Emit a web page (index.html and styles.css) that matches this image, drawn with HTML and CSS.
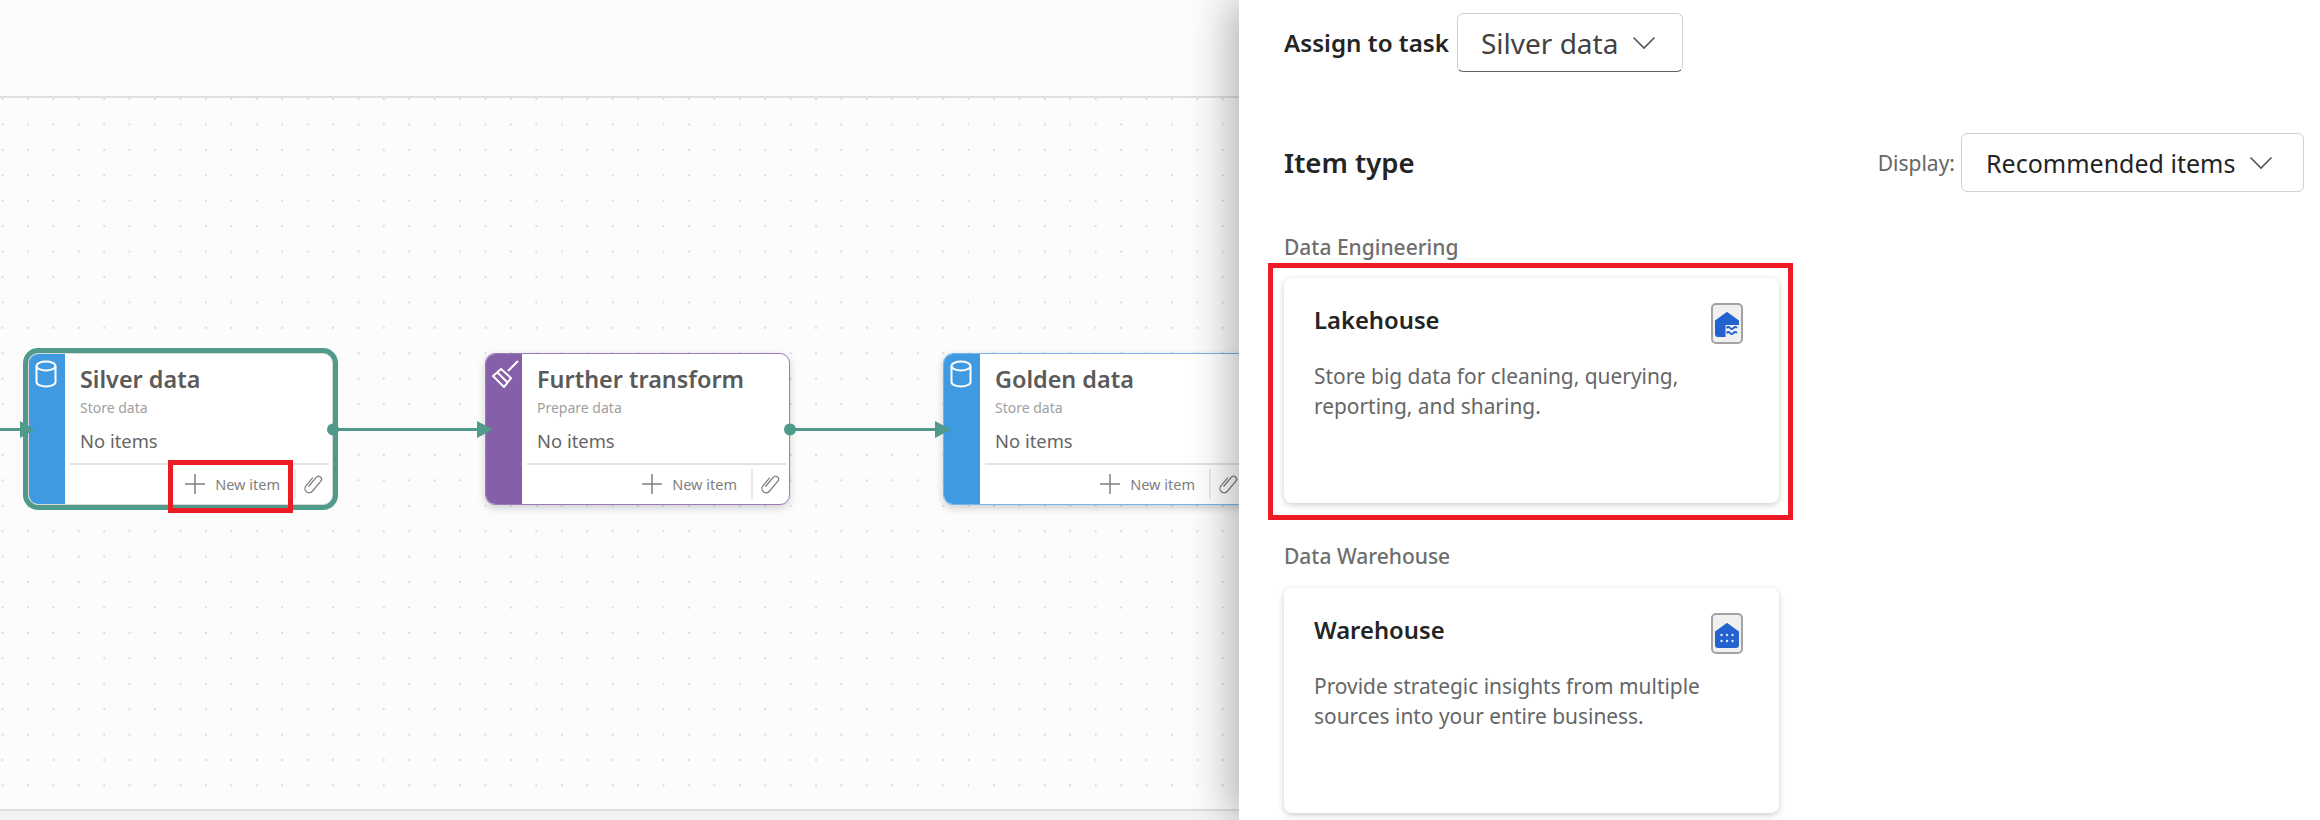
FILE: index.html
```html
<!DOCTYPE html>
<html>
<head>
  <title>New item</title>
  <link rel="stylesheet" href="styles.css">
</head>
<body>

  <div class="page">
    <div class="canvas">
      <div class="toolbar"></div>

      <div class="grid">
        <div class="node node-blue node-selected node-silver">
          <div class="strip">
            <svg class="strip-icon" width="24" height="28" viewBox="0 0 24 28"><ellipse cx="12" cy="6" rx="9.5" ry="4.5"/><path d="M2.500 6v16c0 2.500 4.300 4.500 9.500 4.500s9.500-2 9.500-4.500V6"/></svg>
          </div>
          <div class="node-body">
            <div class="node-title">Silver data</div>
            <div class="node-sub">Store data</div>
            <div class="node-items">No items</div>
            <div class="node-foot">
              <div class="new-item">
                <svg width="22" height="22" viewBox="0 0 22 22"><path d="M11 1v20M1 11h20"/></svg>
                <span>New item</span>
              </div>
              <div class="clip">
                <svg width="24" height="24" viewBox="0 0 20 20"><path transform="rotate(40 10 10)" d="M6.500 6v9a3.500 3.500 0 0 0 7 0V4a2.500 2.500 0 0 0-5 0v10"/></svg>
              </div>
            </div>
          </div>
          <div class="red-mark"></div>
        </div>

        <div class="node node-purple node-transform">
          <div class="strip">
            <svg class="strip-icon" width="28" height="28" viewBox="0 0 28 28"><path d="M27 1 17 11M10 9 20 18 13 27 2 16ZM6.500 12.500 16.500 22.500"/></svg>
          </div>
          <div class="node-body">
            <div class="node-title">Further transform</div>
            <div class="node-sub">Prepare data</div>
            <div class="node-items">No items</div>
            <div class="node-foot">
              <div class="new-item">
                <svg width="22" height="22" viewBox="0 0 22 22"><path d="M11 1v20M1 11h20"/></svg>
                <span>New item</span>
              </div>
              <div class="clip">
                <svg width="24" height="24" viewBox="0 0 20 20"><path transform="rotate(40 10 10)" d="M6.500 6v9a3.500 3.500 0 0 0 7 0V4a2.500 2.500 0 0 0-5 0v10"/></svg>
              </div>
            </div>
          </div>
        </div>

        <div class="node node-blue node-golden">
          <div class="strip">
            <svg class="strip-icon" width="24" height="28" viewBox="0 0 24 28"><ellipse cx="12" cy="6" rx="9.500" ry="4.500"/><path d="M2.500 6v16c0 2.500 4.300 4.500 9.500 4.500s9.500-2 9.500-4.500V6"/></svg>
          </div>
          <div class="node-body">
            <div class="node-title">Golden data</div>
            <div class="node-sub">Store data</div>
            <div class="node-items">No items</div>
            <div class="node-foot">
              <div class="new-item">
                <svg width="22" height="22" viewBox="0 0 22 22"><path d="M11 1v20M1 11h20"/></svg>
                <span>New item</span>
              </div>
              <div class="clip">
                <svg width="24" height="24" viewBox="0 0 20 20"><path transform="rotate(40 10 10)" d="M6.500 6v9a3.500 3.500 0 0 0 7 0V4a2.500 2.500 0 0 0-5 0v10"/></svg>
              </div>
            </div>
          </div>
        </div>

        <!-- wires between the nodes -->
        <svg class="wires" width="1239" height="40" viewBox="0 0 1239 40">
          <path class="wire" d="M0 19.500H24M338 19.500H480M790 19.500H938"/>
          <path class="wire-end" d="M20 11 35 19.500 20 28ZM477 11 493 19.500 477 28ZM935 11 951 19.500 935 28Z"/>
          <circle class="wire-end" cx="333" cy="19.500" r="6"/>
          <circle class="wire-end" cx="790" cy="19.500" r="6"/>
        </svg>
      </div>

      <div class="statusbar"></div>
    </div>

    <div class="panel">
      <div class="assign-row">
        <span class="assign-label">Assign to task</span>
        <div class="select select-task">
          <span>Silver data</span>
          <svg width="24" height="14" viewBox="0 0 24 14"><path d="M1.500 1.500 12 12 22.500 1.500"/></svg>
        </div>
      </div>

      <div class="type-row">
        <h2 class="type-title">Item type</h2>
        <div class="display">
          <span class="display-label">Display:</span>
          <div class="select select-display">
            <span>Recommended items</span>
            <svg width="24" height="14" viewBox="0 0 24 14"><path d="M1.500 1.500 12 12 22.500 1.500"/></svg>
          </div>
        </div>
      </div>

      <div class="group-label group-first">Data Engineering</div>
      <div class="red-box">
        <div class="card">
          <div class="card-head">
            <div class="card-title">Lakehouse</div>
            <div class="card-icon">
              <svg width="28" height="30" viewBox="0 0 28 30">
                <path class="house" d="M14 4 25 12V25a2 2 0 0 1-2 2H5a2 2 0 0 1-2-2V12Z"/>
                <path class="lake" d="M12.500 16H28V29H12.500Z"/>
                <path class="wave" d="M13.500 19q2-2 3.500 0t3.500 0 3.500 0M13.500 24q2-2 3.500 0t3.500 0 3.500 0"/>
              </svg>
            </div>
          </div>
          <p class="card-text">Store big data for cleaning, querying, reporting, and sharing.</p>
        </div>
      </div>

      <div class="group-label">Data Warehouse</div>
      <div class="card card-plain">
        <div class="card-head">
          <div class="card-title">Warehouse</div>
          <div class="card-icon">
            <svg width="28" height="30" viewBox="0 0 28 30">
              <path class="house" d="M14 5 25 13V26a2 2 0 0 1-2 2H5a2 2 0 0 1-2-2V13Z"/>
              <path class="dots" d="M8.500 16h.01M14 16h.01M19.500 16h.01M8.500 22h.01M14 22h.01M19.500 22h.01"/>
            </svg>
          </div>
        </div>
        <p class="card-text">Provide strategic insights from multiple sources into your entire business.</p>
      </div>
    </div>
  </div>

</body>
</html>
```

FILE: styles.css
```css
* {
  box-sizing: border-box;
}

html, body {
  height: 100%;
}

body {
  margin: 0;
  overflow: hidden;
  font-family: "Noto Sans", "Open Sans", sans-serif;
  background: #fff;
}

.page {
  display: flex;
  width: 2320px;
  height: 820px;
  overflow: hidden;
}

/* left side: the task flow canvas */
.canvas {
  display: flex;
  flex-direction: column;
  width: 1239px;
  flex: none;
}

.toolbar {
  height: 98px;
  flex: none;
  background: #fcfcfc;
  border-bottom: 2px solid #e0e0e0;
}

.grid {
  position: relative;
  flex: 1;
  overflow: hidden;
  background-color: #fcfcfc;
  background-image: radial-gradient(circle, #bcebde 1px, transparent 1.2px);
  background-size: 25.43px 25.43px;
  background-position: -10.2px -11.7px;
}

.statusbar {
  height: 11px;
  flex: none;
  background: #f3f3f3;
  border-top: 2px solid #dedede;
}

.node {
  position: absolute;
  top: 255px;
  display: flex;
  width: 305px;
  height: 152px;
  background: #fff;
  border-radius: 10px;
  box-shadow: 0 3px 8px rgba(0,0,0,0.18);
}

.node-silver { left: 28px; }
.node-transform { left: 485px; }
.node-golden { left: 943px; }

.node-blue { border: 1px solid #77b4e8; }
.node-purple { border: 1px solid #9a7cbb; }

.node-selected {
  border: 1px solid #d8d8d8;
  box-shadow: 0 0 0 5px #4f9a8b;
}

.strip {
  width: 36px;
  flex: none;
  padding: 6px 0 0 5px;
  border-radius: 9px 0 0 9px;
}

.node-blue .strip { background: #3f9ae2; }
.node-purple .strip { background: #8560a9; }

.strip-icon {
  display: block;
  fill: none;
  stroke: #fff;
  stroke-width: 2;
}

.node-body {
  display: flex;
  flex-direction: column;
  flex: 1;
  min-width: 0;
  padding: 0 3px 0 5px;
}

.node-title {
  margin: 9px 0 0 10px;
  font-size: 23.4px;
  line-height: 32px;
  font-weight: 600;
  color: #5a5a5a;
  white-space: nowrap;
}

.node-sub {
  margin: 3px 0 0 10px;
  font-size: 14px;
  line-height: 20px;
  color: #a0a0a0;
}

.node-items {
  margin: 11px 0 0 10px;
  font-size: 18.4px;
  line-height: 24px;
  color: #666;
}

.node-foot {
  display: flex;
  justify-content: flex-end;
  align-items: center;
  flex: 1;
  margin-top: 10px;
  padding-bottom: 2px;
  border-top: 2px solid #e2e2e2;
}

.new-item {
  display: flex;
  align-items: center;
  gap: 9px;
  padding-right: 14px;
  font-size: 14.5px;
  color: #808080;
}

.new-item svg {
  fill: none;
  stroke: #808080;
  stroke-width: 1.5;
}

.clip {
  display: flex;
  align-items: center;
  justify-content: center;
  width: 35px;
  height: 30px;
  border-left: 2px solid #eaeaea;
}

.clip svg {
  fill: none;
  stroke: #808080;
  stroke-width: 1.1;
}

.red-mark {
  position: absolute;
  left: 139px;
  top: 106px;
  width: 125px;
  height: 53px;
  border: 5px solid #ed1c24;
}

.wires {
  position: absolute;
  left: 0;
  top: 312px;
}

.wire {
  fill: none;
  stroke: #4f9a8b;
  stroke-width: 3;
}

.wire-end {
  fill: #4f9a8b;
}

/* right side: the new item panel */
.panel {
  position: relative;
  flex: 1;
  padding: 13px 16px 0 45px;
  background: #fff;
  box-shadow: -8px 0 40px rgba(0,0,0,0.3);
}

.assign-row {
  display: flex;
  align-items: center;
  gap: 8px;
}

.assign-label {
  font-size: 24.2px;
  font-weight: 600;
  color: #242424;
}

.select {
  display: flex;
  align-items: center;
  height: 59px;
  background: #fff;
  border: 1px solid #d1d1d1;
  border-bottom-color: #616161;
  border-radius: 6px;
  color: #242424;
}

.select svg {
  fill: none;
  stroke: #555;
  stroke-width: 1.6;
}

.select-task {
  width: 226px;
  padding: 0 26px 0 23px;
  justify-content: space-between;
  font-size: 28px;
  color: #424242;
}

.select-display {
  width: 343px;
  padding: 0 30px 0 24px;
  justify-content: space-between;
  border-bottom-color: #d1d1d1;
  font-size: 25px;
}

.type-row {
  display: flex;
  align-items: center;
  justify-content: space-between;
  margin-top: 61px;
}

.type-title {
  margin: 0;
  font-size: 27.5px;
  font-weight: 600;
  color: #242424;
}

.display {
  display: flex;
  align-items: center;
  gap: 6px;
}

.display-label {
  font-size: 21px;
  color: #666;
}

.group-label {
  margin-top: 22px;
  font-size: 21px;
  line-height: 28px;
  font-weight: 500;
  color: #6e6e6e;
}

.group-first {
  margin-top: 41px;
}

.red-box {
  width: 525px;
  height: 257px;
  margin: 2px 0 0 -16px;
  padding: 10px 9px 12px 11px;
  border: 5px solid #ed1c24;
}

.card {
  width: 495px;
  height: 225px;
  padding: 25px 36px 0 30px;
  background: #fff;
  border-radius: 8px;
  box-shadow: 0 2px 6px rgba(0,0,0,0.2);
}

.card-plain {
  margin-top: 18px;
}

.card-head {
  display: flex;
  justify-content: space-between;
  align-items: flex-start;
  height: 58px;
}

.card-title {
  font-size: 23.8px;
  line-height: 34px;
  font-weight: 600;
  color: #242424;
}

.card-icon {
  display: flex;
  align-items: center;
  justify-content: center;
  width: 32px;
  height: 41px;
  background: #f0f0f0;
  border: 2px solid #a3a3a3;
  border-radius: 5px;
}

.card-icon svg {
  flex: none;
}

.house {
  fill: #2362cf;
  stroke: #2362cf;
  stroke-width: 2;
  stroke-linejoin: round;
}

.lake {
  fill: #f0f0f0;
}

.wave {
  fill: none;
  stroke: #2362cf;
  stroke-width: 1.8;
}

.dots {
  fill: none;
  stroke: #dfe8fa;
  stroke-width: 2.4;
  stroke-linecap: round;
}

.card-text {
  width: 400px;
  margin: 0;
  font-size: 20.9px;
  line-height: 30px;
  color: #666;
}
```
